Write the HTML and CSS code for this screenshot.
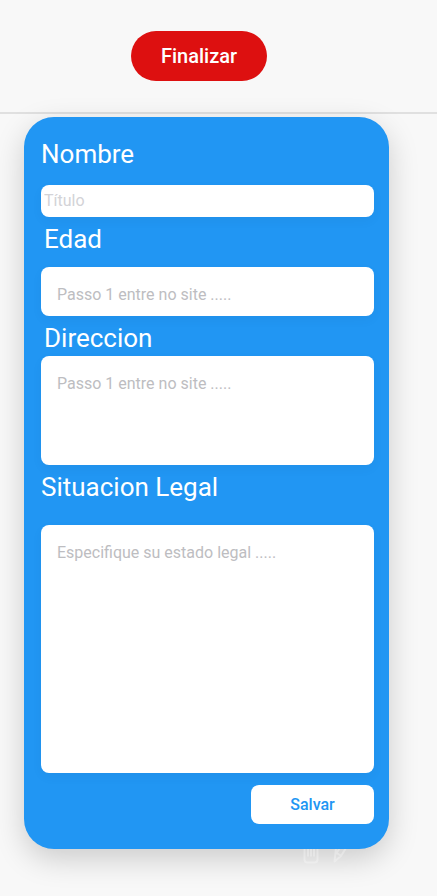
FILE: index.html
```html
<!DOCTYPE html>
<html lang="es">
<head>
<meta charset="utf-8">
<meta name="viewport" content="width=device-width, initial-scale=1">
<title>Formulario</title>
<link rel="stylesheet" href="styles.css">
</head>
<body>
<header class="top">
  <button class="finish" type="button">Finalizar</button>
</header>
<main class="page">
  <form class="card">
    <div class="field field-name">
      <label for="nombre">Nombre</label>
      <input class="box box-name" id="nombre" type="text" placeholder="Título">
    </div>
    <div class="field field-age">
      <label class="inset" for="edad">Edad</label>
      <input class="box box-age" id="edad" type="text" placeholder="Passo 1 entre no site .....">
    </div>
    <div class="field field-address">
      <label class="inset" for="direccion">Direccion</label>
      <textarea class="box box-address" id="direccion" placeholder="Passo 1 entre no site ....."></textarea>
    </div>
    <div class="field field-legal">
      <label for="legal">Situacion Legal</label>
      <textarea class="box box-legal" id="legal" placeholder="Especifique su estado legal ....."></textarea>
    </div>
    <button class="save" type="button">Salvar</button>
  </form>
  <div class="tools">
    <svg width="16" height="15" viewBox="0 0 16 15" aria-hidden="true">
      <path d="M1.500 -4V10.500q0 3 3 3h7q3 0 3-3V-4"/>
      <path d="M5 -2V7.500M8 -2V7.500M11 -2V7.500"/>
    </svg>
    <svg width="16" height="15" viewBox="0 0 16 15" aria-hidden="true">
      <path d="M3 -1L1.500 12.500L8 7L13 -1M2.500 3L8 7M8 -3L3 5"/>
    </svg>
  </div>
</main>
</body>
</html>
```
FILE: styles.css
```css
* {
  box-sizing: border-box;
}

body {
  min-height: 100vh;
  margin: 0;
  background: #f8f8f8;
  font-family: Roboto, "Liberation Sans", sans-serif;
}

button,
input,
textarea {
  border: 0;
  font-family: inherit;
}

.top {
  display: flex;
  justify-content: center;
  padding: 31px 39px 31px 0;
  border-bottom: 2px solid #e0e0e0;
}

.finish {
  width: 136px;
  height: 50px;
  border-radius: 25px;
  background: #dd1010;
  color: #fff;
  font-size: 20px;
  font-weight: 500;
}

.page {
  padding: 3px 48px 0 24px;
}

.card {
  display: flex;
  flex-direction: column;
  gap: 7px;
  padding: 22px 15px 25px 17px;
  border-radius: 30px;
  background: #2196f3;
  box-shadow: 0 10px 30px rgba(0, 0, 0, 0.18);
}

.field {
  display: flex;
  flex-direction: column;
}

.field-name {
  gap: 16px;
}

.field-age {
  gap: 13px;
}

.field-address {
  gap: 3px;
}

.field-legal {
  gap: 23px;
}

label {
  color: #fff;
  font-size: 26px;
  line-height: 30px;
}

.inset {
  padding-left: 3px;
}

.box {
  display: block;
  width: 100%;
  padding: 18px 16px 11px;
  border-radius: 8px;
  background: #fff;
  box-shadow: 0 4px 12px rgba(0, 0, 0, 0.04);
  color: #333;
  font-size: 16px;
  line-height: 20px;
  resize: none;
}

.box::placeholder {
  color: #bdbdc1;
}

.box-name {
  height: 32px;
  padding: 5px 3px 7px;
}

.box-name::placeholder {
  color: #d3d3d7;
}

.box-age {
  height: 49px;
  padding: 17px 16px 12px;
}

.box-address {
  height: 109px;
}

.box-legal {
  height: 248px;
}

.save {
  align-self: flex-end;
  width: 123px;
  height: 39px;
  margin-top: 5px;
  border-radius: 8px;
  background: #fff;
  color: #2196f3;
  font-size: 16px;
  font-weight: 500;
}

.tools {
  display: flex;
  justify-content: flex-end;
  gap: 14px;
  padding-right: 40px;
}

.tools svg {
  fill: none;
  stroke: #fff;
  stroke-opacity: 0.3;
  stroke-width: 2;
  stroke-linejoin: round;
}
```
